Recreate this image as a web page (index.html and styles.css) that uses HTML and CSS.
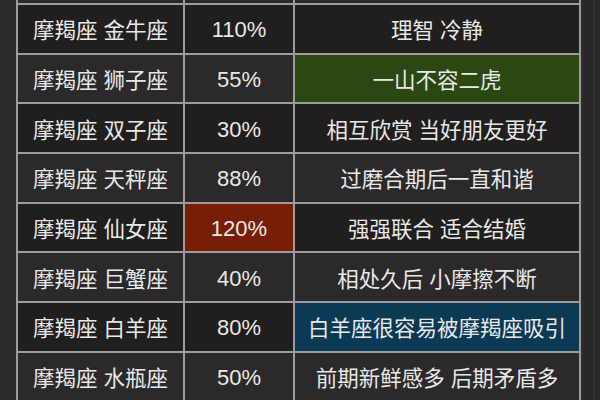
FILE: index.html
```html
<!DOCTYPE html>
<html lang="zh">
<head>
<meta charset="utf-8">
<link rel="stylesheet" href="styles.css">
</head>
<body>
<div class="page">
  <div class="sheet">
    <div class="cell partial light"></div><div class="cell partial light"></div><div class="cell partial light"></div>

    <div class="cell dark">摩羯座 金牛座</div><div class="cell num dark">110%</div><div class="cell dark">理智 冷静</div>
    <div class="cell light">摩羯座 狮子座</div><div class="cell num light">55%</div><div class="cell green">一山不容二虎</div>
    <div class="cell dark">摩羯座 双子座</div><div class="cell num dark">30%</div><div class="cell dark">相互欣赏 当好朋友更好</div>
    <div class="cell light">摩羯座 天秤座</div><div class="cell num light">88%</div><div class="cell light">过磨合期后一直和谐</div>
    <div class="cell dark">摩羯座 仙女座</div><div class="cell num red">120%</div><div class="cell dark">强强联合 适合结婚</div>
    <div class="cell light">摩羯座 巨蟹座</div><div class="cell num light">40%</div><div class="cell light">相处久后 小摩擦不断</div>
    <div class="cell dark">摩羯座 白羊座</div><div class="cell num dark">80%</div><div class="cell blue">白羊座很容易被摩羯座吸引</div>
    <div class="cell light">摩羯座 水瓶座</div><div class="cell num light">50%</div><div class="cell light">前期新鲜感多 后期矛盾多</div>
  </div>
  <div class="edge"></div>
</div>
</body>
</html>
```
FILE: styles.css
```css
html, body {
  margin: 0;
  padding: 0;
  background: #2b2b2b;
  width: 600px;
  height: 400px;
  overflow: hidden;
}
.page {
  display: flex;
  align-items: flex-start;
  padding-left: 16px;
  height: 400px;
}
.sheet {
  display: grid;
  grid-template-columns: 165px 108px 284px;
  grid-template-rows: 3px repeat(8, 47.7px);
  gap: 2px;
  padding: 0 2px 2px 2px;
  background: #9c9c9c;
  font-family: "Liberation Sans", "Noto Sans CJK SC", sans-serif;
  font-size: 21.5px;
  color: #e8e8e8;
}
.cell {
  display: flex;
  align-items: center;
  justify-content: center;
  white-space: nowrap;
  overflow: hidden;
}
.num {
  padding-top: 3px;
  font-size: 22px;
}
.dark { background: #211e1e; }
.light { background: #2b2929; }
.green { background: #2b4812; }
.red { background: #781d06; }
.blue { background: #0c3953; }
.edge {
  margin-left: 3px;
  width: 9px;
  height: 400px;
  background: #262626;
  border-right: 1px solid #363636;
}
```
